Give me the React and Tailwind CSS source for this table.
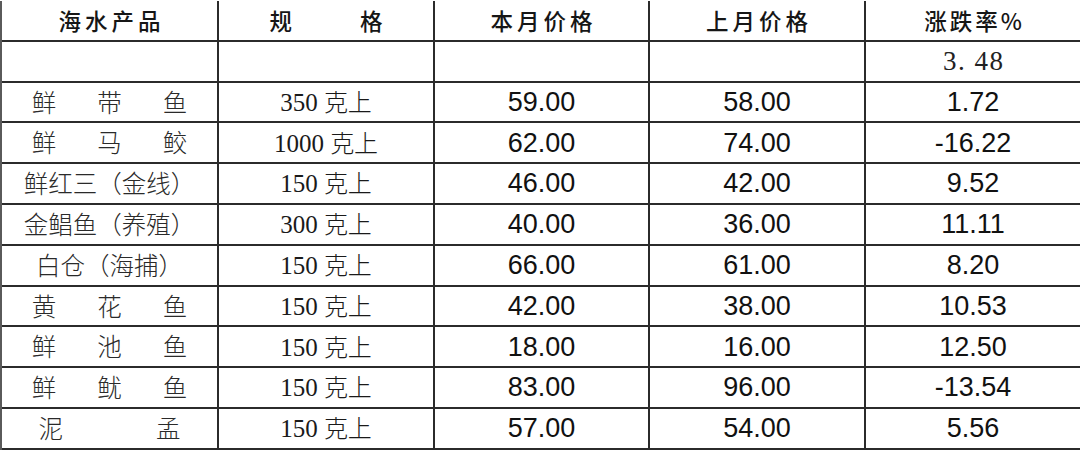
import React from "react";

const rows = [
  { name: ["鲜", "带", "鱼"], gap: "gap-[41px]", spec: "350", a: "59.00", b: "58.00", c: "1.72" },
  { name: ["鲜", "马", "鲛"], gap: "gap-[41px]", spec: "1000", a: "62.00", b: "74.00", c: "-16.22" },
  { name: ["鲜红三（金线）"], gap: "", spec: "150", a: "46.00", b: "42.00", c: "9.52" },
  { name: ["金鲳鱼（养殖）"], gap: "", spec: "300", a: "40.00", b: "36.00", c: "11.11" },
  { name: ["白仓（海捕）"], gap: "", spec: "150", a: "66.00", b: "61.00", c: "8.20" },
  { name: ["黄", "花", "鱼"], gap: "gap-[41px]", spec: "150", a: "42.00", b: "38.00", c: "10.53" },
  { name: ["鲜", "池", "鱼"], gap: "gap-[41px]", spec: "150", a: "18.00", b: "16.00", c: "12.50" },
  { name: ["鲜", "鱿", "鱼"], gap: "gap-[41px]", spec: "150", a: "83.00", b: "96.00", c: "-13.54" },
  { name: ["泥", "孟"], gap: "gap-[93px]", spec: "150", a: "57.00", b: "54.00", c: "5.56" },
];

const cell = "flex items-center justify-center border-r-2 border-b-2 border-[#2b2b2b] h-[40.8px] overflow-hidden";
const hdr = "[font-family:'Noto_Sans_CJK_SC',sans-serif] text-[22.5px] text-[#161616] font-medium";
const nameF = "[font-family:'Noto_Sans_CJK_SC',sans-serif] text-[24.5px] text-[#2a2a2a] font-light";
const numF = "[font-family:'Liberation_Sans',Arial,sans-serif] text-[27px] text-[#111]";

export default function App() {
  return (
    <div className="w-[1080px] h-[450px] bg-white pt-[1px] overflow-hidden">
      <div className="grid grid-cols-[217px_216px_215px_216px_216px] border-l-2 border-[#5a5a5a]">
        <div className={cell}><span className={`${hdr} tracking-[4px] pl-[4px]`}>海水产品</span></div>
        <div className={cell}>
          <div className={`flex gap-[68px] ${hdr}`}><span>规</span><span>格</span></div>
        </div>
        <div className={cell}><span className={`${hdr} tracking-[4px] pl-[4px]`}>本月价格</span></div>
        <div className={cell}><span className={`${hdr} tracking-[4px] pl-[4px]`}>上月价格</span></div>
        <div className={cell}><span className={`${hdr} tracking-[3px] pl-[3px]`}>涨跌率%</span></div>

        <div className={cell}></div>
        <div className={cell}></div>
        <div className={cell}></div>
        <div className={cell}></div>
        <div className={cell}>
          <span className="[font-family:'Liberation_Serif',serif] text-[27px] text-[#222] tracking-[1.5px] pl-[1.5px]">3.&nbsp;48</span>
        </div>

        {rows.map((r, i) => (
          <React.Fragment key={i}>
            <div className={cell}>
              <div className={`flex ${r.gap} ${nameF}`}>
                {r.name.map((n, j) => (
                  <span key={j}>{n}</span>
                ))}
              </div>
            </div>
            <div className={cell}>
              <span className="text-[#1a1a1a]">
                <span className="[font-family:'Liberation_Serif',serif] text-[25px]">{r.spec} </span>
                <span className="[font-family:'Noto_Sans_CJK_SC',sans-serif] text-[24px] font-light">克上</span>
              </span>
            </div>
            <div className={cell}><span className={numF}>{r.a}</span></div>
            <div className={cell}><span className={numF}>{r.b}</span></div>
            <div className={cell}><span className={numF}>{r.c}</span></div>
          </React.Fragment>
        ))}
      </div>
    </div>
  );
}
